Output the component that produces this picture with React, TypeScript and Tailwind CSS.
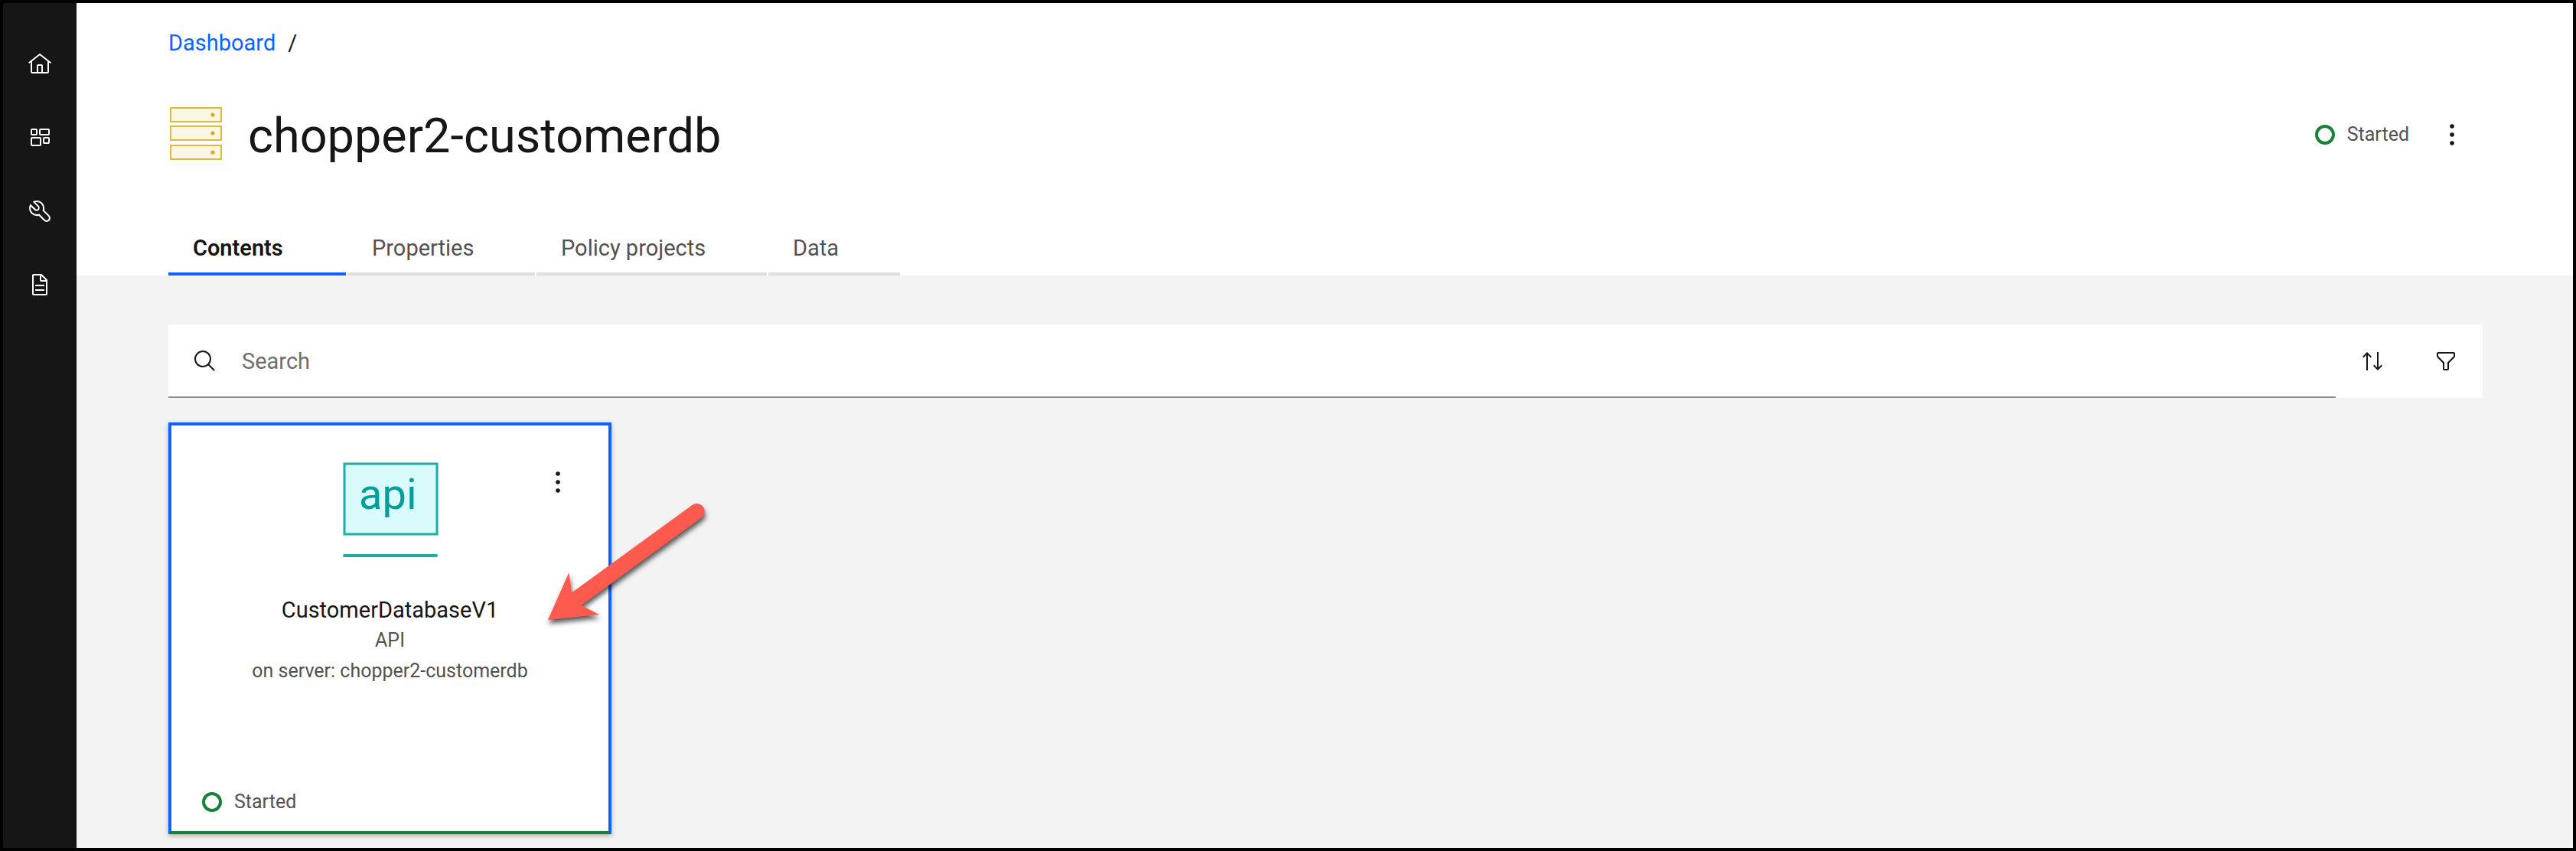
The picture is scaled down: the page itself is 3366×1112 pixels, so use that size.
import type { ReactNode } from "react";

function Icon({ children }: { children: ReactNode }) {
  return (
    <svg viewBox="0 0 32 32" className="size-8" fill="currentColor" aria-hidden="true">
      {children}
    </svg>
  );
}

function HomeIcon() {
  return (
    <Icon>
      <path d="M16.6123,2.2138a1.01,1.01,0,0,0-1.2427,0L1,13.4194l1.2427,1.5717L4,13.6208V26a2.0041,2.0041,0,0,0,2,2H26a2.0037,2.0037,0,0,0,2-2V13.63L29.7573,15,31,13.4282ZM18,26H14V18h4Zm2,0V18a2.0023,2.0023,0,0,0-2-2H14a2.002,2.002,0,0,0-2,2v8H6V12.0615l10-7.79,10,7.8005V26Z" />
    </Icon>
  );
}

function DashboardIcon() {
  return (
    <Icon>
      <g fill="none" stroke="currentColor" strokeWidth="2">
        <rect x="5" y="5" width="7" height="7" rx="1" />
        <rect x="16" y="5" width="12" height="7" rx="1" />
        <rect x="5" y="16" width="12" height="10" rx="1" />
        <rect x="21" y="16" width="7" height="7" rx="1" />
      </g>
    </Icon>
  );
}

function ToolsIcon() {
  return (
    <Icon>
      <path d="M12.1 2a9.8 9.8 0 0 0-5.4 1.6l6.4 6.4a2.1 2.1 0 0 1 .2 3 2.1 2.1 0 0 1-3-.2L3.7 6.4A9.84 9.84 0 0 0 2 12.1a10.14 10.14 0 0 0 10.1 10.1 10.9 10.9 0 0 0 2.6-.3l6.7 6.7a5 5 0 0 0 7.1-7.1l-6.7-6.7a10.9 10.9 0 0 0 .3-2.6A10 10 0 0 0 12.1 2zm8 10.1a7.61 7.61 0 0 1-.3 2.1l-.3 1.1.8.8 6.7 6.7a2.88 2.88 0 0 1 .9 2.1A2.72 2.72 0 0 1 27 27a2.9 2.9 0 0 1-4.2 0l-6.7-6.7-.8-.8-1.1.3a7.61 7.61 0 0 1-2.1.3 8.27 8.27 0 0 1-5.7-2.3A7.63 7.63 0 0 1 4 12.1a8.33 8.33 0 0 1 .3-2.2l4.4 4.4a4.14 4.14 0 0 0 5.9.2 4.14 4.14 0 0 0-.2-5.9L10 4.2a6.45 6.45 0 0 1 2-.3 8.27 8.27 0 0 1 5.7 2.3 8.49 8.49 0 0 1 2.4 5.9z" />
    </Icon>
  );
}

function DocumentIcon() {
  return (
    <Icon>
      <path d="M25.7 9.3l-7-7A.91.91 0 0 0 18 2H8A2 2 0 0 0 6 4V28a2 2 0 0 0 2 2H24a2 2 0 0 0 2-2V10a.91.91 0 0 0-.3-.7zM18 4.4 23.6 10H18zM24 28H8V4h8v6a2 2 0 0 0 2 2h6z" />
      <path d="M10 22h12v2H10zM10 16h12v2H10z" />
    </Icon>
  );
}

function SearchIcon() {
  return (
    <Icon>
      <path d="M29,27.5859l-7.5521-7.5521a11.0177,11.0177,0,1,0-1.4141,1.4141L27.5859,29ZM4,13a9,9,0,1,1,9,9A9.01,9.01,0,0,1,4,13Z" />
    </Icon>
  );
}

function SortIcon() {
  return (
    <Icon>
      <path d="M27.6 20.6L24 24.2 24 4 22 4 22 24.2 18.4 20.6 17 22 23 28 29 22zM9 4 3 10 4.4 11.4 8 7.8 8 28 10 28 10 7.8 13.6 11.4 15 10z" />
    </Icon>
  );
}

function FilterIcon() {
  return (
    <Icon>
      <path d="M18,28H14a2,2,0,0,1-2-2V18.41L4.59,11A2,2,0,0,1,4,9.59V6A2,2,0,0,1,6,4H26a2,2,0,0,1,2,2V9.59A2,2,0,0,1,27.41,11L20,18.41V26A2,2,0,0,1,18,28ZM6,6V9.59l8,8V26h4V17.59l8-8V6Z" />
    </Icon>
  );
}

function OverflowIcon() {
  return (
    <Icon>
      <circle cx="16" cy="5" r="2.8" />
      <circle cx="16" cy="16" r="2.8" />
      <circle cx="16" cy="27" r="2.8" />
    </Icon>
  );
}

function ServerIcon() {
  return (
    <svg viewBox="0 0 72 76" className="h-[76px] w-[72px]" aria-hidden="true">
      {[3, 27, 52].map((y) => (
        <g key={y}>
          <rect x="3" y={y} width="66" height="18" fill="#fbf6e4" stroke="#dfb93c" strokeWidth="2" />
          <circle cx="58" cy={y + 9} r="2.6" fill="#dbaa17" />
        </g>
      ))}
    </svg>
  );
}

function ApiIcon() {
  return (
    <svg viewBox="0 0 126 126" className="size-[126px]" role="img" aria-label="api">
      <rect x="3" y="4" width="121" height="92" fill="#d9fbfb" stroke="#22aaa6" strokeWidth="3" />
      <path d="M3 124h120" stroke="#22aaa6" strokeWidth="4" strokeLinecap="round" />
      <text x="22" y="63" fill="#009d9a" fontSize="56" className="font-[Roboto,sans-serif]">
        api
      </text>
    </svg>
  );
}

function Pointer() {
  return (
    <svg
      viewBox="710 650 230 180"
      className="pointer-events-none absolute top-[94px] left-[486px] h-[180px] w-[230px] drop-shadow-[1px_5px_3px_rgba(0,0,0,0.65)]"
      aria-hidden="true"
    >
      <path
        d="M716 810 743.500 748 747 774.500 904.500 660A10 10 0 0 1 916.500 676.500L759.500 791 783 803Z"
        fill="#ff5a4d"
      />
    </svg>
  );
}

function Status() {
  return (
    <span className="flex items-center gap-4 text-[25px] leading-10 text-[#525252]">
      <span className="size-[26px] rounded-full border-4 border-[#198038]" />
      Started
    </span>
  );
}

const navItems = [
  { label: "Home", icon: <HomeIcon /> },
  { label: "Dashboard", icon: <DashboardIcon /> },
  { label: "Tools", icon: <ToolsIcon /> },
  { label: "Documentation", icon: <DocumentIcon /> },
];

const tabs = [
  { label: "Contents", style: "w-[232px] border-[#0f62fe] font-semibold text-[#161616]" },
  { label: "Properties", style: "w-[245px] border-[#e0e0e0] text-[#525252]" },
  { label: "Policy projects", style: "w-[301px] border-[#e0e0e0] text-[#525252]" },
  { label: "Data", style: "w-[172px] border-[#e0e0e0] text-[#525252]" },
];

export default function App() {
  return (
    <div className="flex min-h-screen border-4 border-black bg-[#f3f3f3] font-[Roboto,sans-serif] text-[29px] leading-10 text-[#161616]">
      <nav aria-label="Main" className="flex w-24 shrink-0 flex-col bg-[#161616] pt-8 text-white">
        {navItems.map((item) => (
          <a key={item.label} href="#" aria-label={item.label} className="flex h-24 items-center justify-center">
            {item.icon}
          </a>
        ))}
      </nav>

      <div className="min-w-0 flex-1">
        <header className="bg-white pt-8 pr-[118px] pl-[120px]">
          <nav aria-label="Breadcrumb" className="flex gap-4">
            <a href="#" className="text-[#0f62fe]">
              Dashboard
            </a>
            <span>/</span>
          </nav>

          <div className="mt-[60px] flex h-20 items-center">
            <ServerIcon />
            <h1 className="ml-8 pt-1 text-[63px] leading-[80px]">chopper2-customerdb</h1>
            <div className="ml-auto flex items-center gap-4">
              <Status />
              <button type="button" aria-label="Server actions" className="flex size-20 items-center justify-center">
                <OverflowIcon />
              </button>
            </div>
          </div>

          <div role="tablist" className="mt-20 flex gap-0.5">
            {tabs.map((tab, index) => (
              <button
                key={tab.label}
                type="button"
                role="tab"
                aria-selected={index === 0}
                className={`border-b-4 px-8 pt-2 pb-3 text-left whitespace-nowrap ${tab.style}`}
              >
                {tab.label}
              </button>
            ))}
          </div>
        </header>

        <main className="pt-16 pr-[118px] pb-[18px] pl-[120px]">
          <div className="flex h-24 bg-white">
            <label className="flex flex-1 items-center gap-8 border-b-2 border-[#8d8d8d] pt-0.5 pl-8">
              <SearchIcon />
              <input
                type="search"
                aria-label="Search"
                placeholder="Search"
                className="min-w-0 flex-1 bg-transparent outline-none placeholder:text-[#6f6f6f]"
              />
            </label>
            <button type="button" aria-label="Sort" className="flex w-24 items-center justify-center">
              <SortIcon />
            </button>
            <button type="button" aria-label="Filter" className="flex w-24 items-center justify-center">
              <FilterIcon />
            </button>
          </div>

          <article className="relative mt-8 flex h-[538px] w-[579px] flex-col border-4 border-[#0f62fe] border-b-[#198038] bg-white shadow-[0_2px_6px_rgba(0,0,0,0.3)]">
            <div className="grid grid-cols-[1fr_auto_1fr] pt-[46px]">
              <span />
              <ApiIcon />
              <button
                type="button"
                aria-label="API actions"
                className="mt-1 mr-[42px] flex size-12 items-center justify-center justify-self-end"
              >
                <OverflowIcon />
              </button>
            </div>
            <div className="mt-[49px] text-center text-[25px] text-[#525252]">
              <h2 className="text-[29px] text-[#161616]">CustomerDatabaseV1</h2>
              <p>API</p>
              <p>on server: chopper2-customerdb</p>
            </div>
            <div className="mt-auto pb-[18px] pl-10">
              <Status />
            </div>
            <Pointer />
          </article>
        </main>
      </div>
    </div>
  );
}
